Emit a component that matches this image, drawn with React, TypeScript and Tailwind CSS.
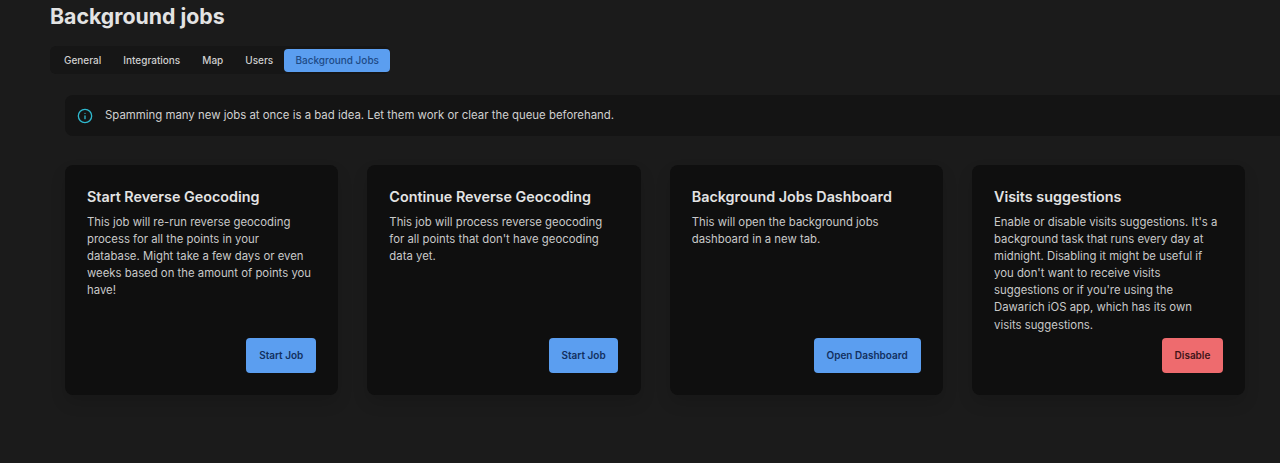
import { Info } from "lucide-react";

const TABS = ["General", "Integrations", "Map", "Users"];

const CARDS = [
  {
    title: "Start Reverse Geocoding",
    text: "This job will re-run reverse geocoding process for all the points in your database. Might take a few days or even weeks based on the amount of points you have!",
    action: "Start Job",
    btn: "w-[69.5px] bg-[#5b9ef0] text-[#12305f]",
  },
  {
    title: "Continue Reverse Geocoding",
    text: "This job will process reverse geocoding for all points that don't have geocoding data yet.",
    action: "Start Job",
    btn: "w-[69.5px] bg-[#5b9ef0] text-[#12305f]",
  },
  {
    title: "Background Jobs Dashboard",
    text: "This will open the background jobs dashboard in a new tab.",
    action: "Open Dashboard",
    btn: "w-[107px] bg-[#5b9ef0] text-[#12305f]",
  },
  {
    title: "Visits suggestions",
    text: "Enable or disable visits suggestions. It's a background task that runs every day at midnight. Disabling it might be useful if you don't want to receive visits suggestions or if you're using the Dawarich iOS app, which has its own visits suggestions.",
    action: "Disable",
    btn: "w-[61px] bg-[#ee6b6e] text-[#3f1418]",
  },
];

export default function App() {
  return (
    <div className="h-[463px] w-[1280px] overflow-hidden bg-[#1b1b1b] font-['Inter',sans-serif]">
      <div className="pl-[50px] pt-[3px]">
        <h1 className="text-[21.3px] leading-[27px] font-bold text-[#e3e3e3]">Background jobs</h1>

        <div className="mt-[16px] flex h-[28px] w-fit items-center rounded-md bg-[#161616] pl-[3px]">
          {TABS.map((t) => (
            <div key={t} className="px-[11px] pt-[1px] text-[10px] font-medium text-[#cfcfcf]">
              {t}
            </div>
          ))}
          <div className="flex h-[23px] items-center rounded-[4px] bg-[#5b9ef0] px-[11.25px] pt-[1px] text-[10px] font-medium text-[#1d4a86]">
            Background Jobs
          </div>
        </div>
      </div>

      <div className="pl-[65px] pt-[21px]">
        <div className="flex h-[41px] w-[1240px] items-center gap-[12px] rounded-lg bg-[#141414] pl-[12px]">
          <Info className="h-[16px] w-[16px] text-[#2fb9cf]" strokeWidth={2} />
          <span className="text-[11.4px] text-[#d0d0d0]">
            Spamming many new jobs at once is a bad idea. Let them work or clear the queue beforehand.
          </span>
        </div>

        <div className="mt-[29px] flex w-[1180.5px] gap-[28.9px]">
          {CARDS.map((c) => (
            <div
              key={c.title}
              className="flex h-[230px] flex-1 flex-col rounded-lg bg-[#0f0f0f] pb-[22px] pl-[22px] pr-[22.5px] pt-[22px] shadow-[0_8px_16px_rgba(0,0,0,0.12)]"
            >
              <h2 className="text-[14.35px] leading-[20px] font-semibold text-[#e3e3e3]">{c.title}</h2>
              <p className="mt-[7px] w-[226px] text-[11.35px] leading-[17.1px] text-[#c9c9c9]">{c.text}</p>
              <div className="mt-auto flex justify-end">
                <button className={`h-[35px] rounded-[4px] text-[10px] font-semibold ${c.btn}`}>
                  {c.action}
                </button>
              </div>
            </div>
          ))}
        </div>
      </div>
    </div>
  );
}
